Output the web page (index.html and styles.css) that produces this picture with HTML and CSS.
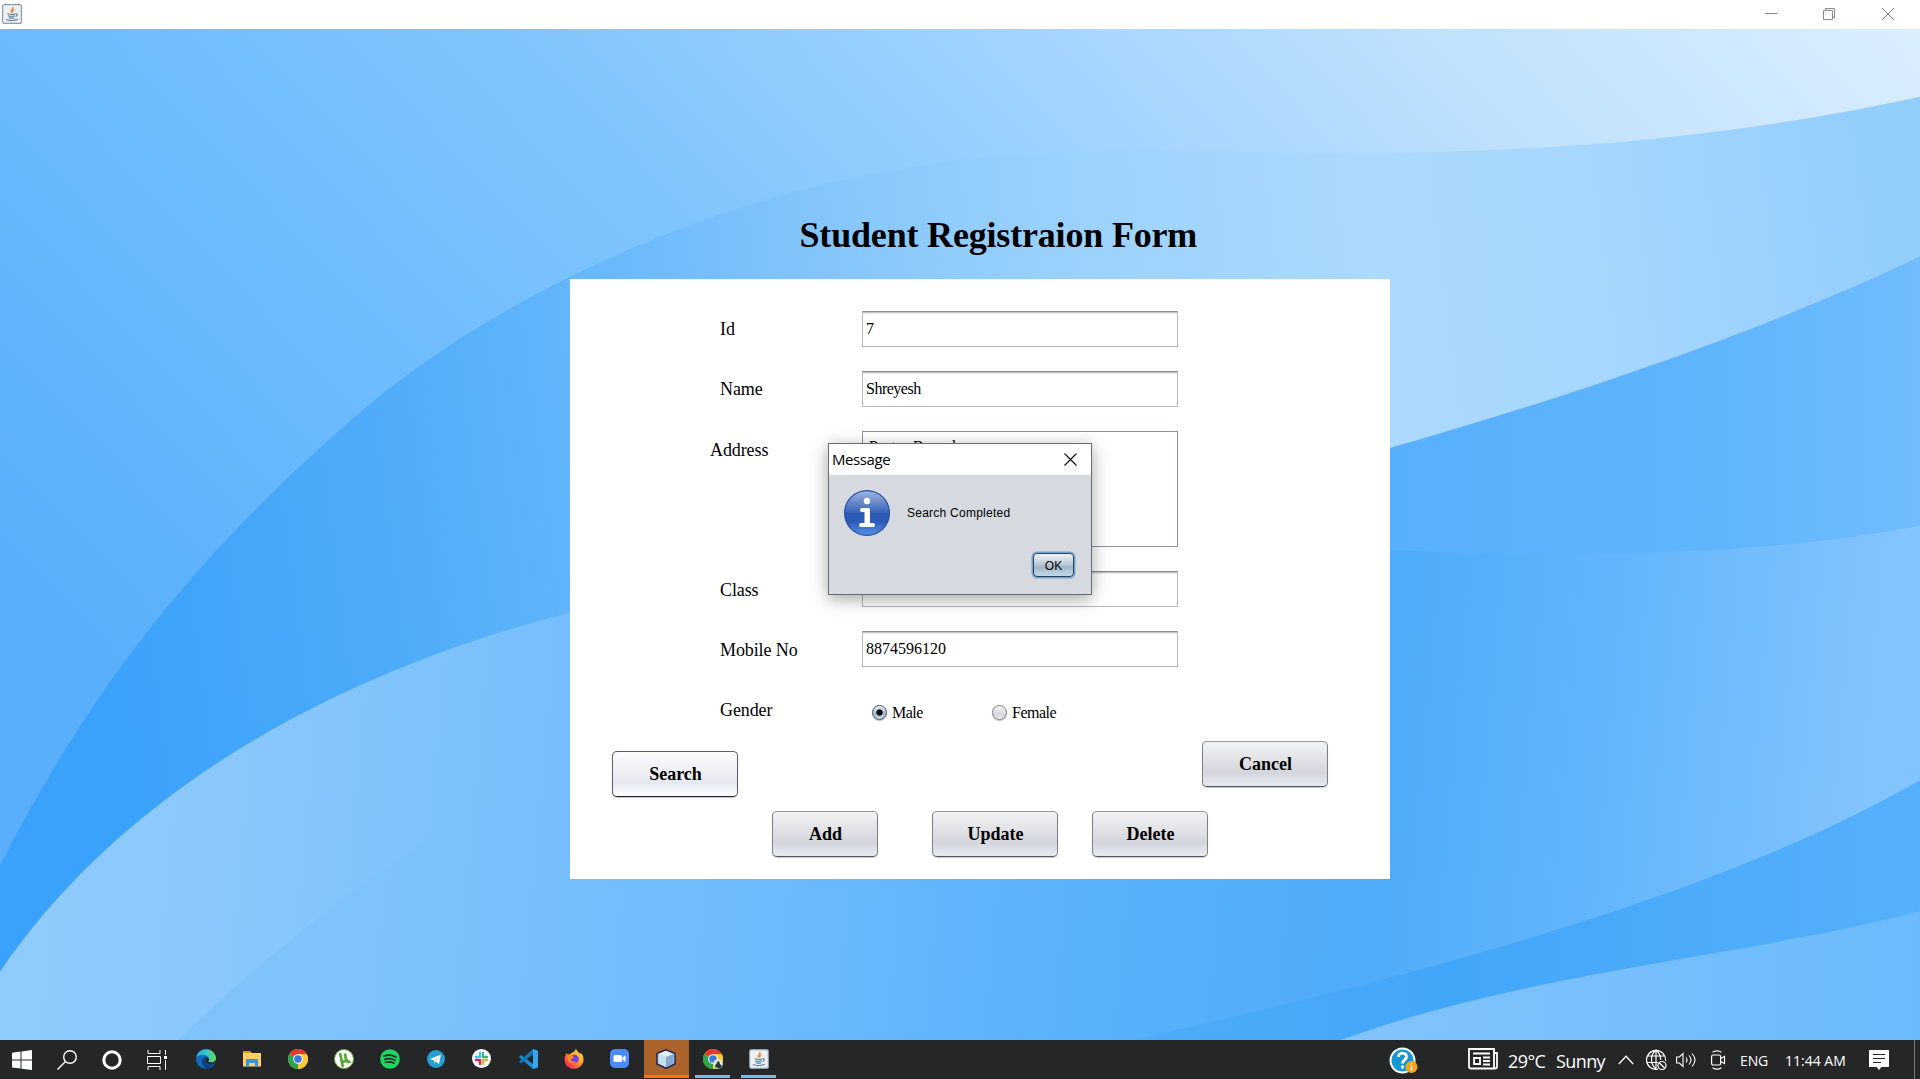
FILE: index.html
```
<!DOCTYPE html>
<html lang="en">
<head>
<meta charset="utf-8">
<title>Student Registration</title>
<link rel="stylesheet" href="styles.css">
</head>
<body>
<svg class="defs" aria-hidden="true">
  <symbol id="java" viewBox="0 0 20 20">
    <rect x=".6" y=".6" width="18.8" height="18.8" rx="2" fill="#eef1f4" stroke="#8a9dab" stroke-width="1.2"/>
    <path d="M10.6 3c1.800 1.700-3 2.800-1 5.600M12.300 5.500c-2 1-2.100 1.700-1.200 3" fill="none" stroke="#ee8b3c" stroke-width="1.500"/>
    <path d="M5.500 9.800c2.500.9 6 .8 8-.1M6 11.800c2 .8 5 .8 7 0M6.800 13.700c2 .7 4 .6 5.500 0M13.800 9.800c2.300-.2 1.700 2-.2 2.700M4 15.500c3 1.500 9 1.300 12-.2" fill="none" stroke="#5b84a3" stroke-width="1.200"/>
  </symbol>
  <symbol id="chrome" viewBox="0 0 20 20">
    <circle cx="10" cy="10" r="10" fill="#fcc934"/>
    <path d="M10 10 1.300 5A10 10 0 0 1 18.700 5z" fill="#e33b2e"/>
    <path d="M10 10 10 20A10 10 0 0 1 1.300 5z" fill="#2da44e"/>
    <path d="M10 5h8.700A10 10 0 0 1 10 20l4.500-7.500z" fill="#fcc934"/>
    <circle cx="10" cy="10" r="4.800" fill="#fff"/><circle cx="10" cy="10" r="3.800" fill="#3b78e7"/>
  </symbol>
</svg>

<header class="titlebar">
  <svg class="app-icon"><use href="#java"/></svg>
  <div class="win-controls">
    <svg width="12" height="12" viewBox="0 0 12 12"><path d="M0 5.500h12"/></svg>
    <svg width="12" height="12" viewBox="0 0 12 12"><path d="M.5 2.500h9v9h-9zM2.500 2.500v-2h9v9h-2"/></svg>
    <svg width="12" height="12" viewBox="0 0 12 12"><path d="m0 0 12 12M12 0 0 12"/></svg>
  </div>
</header>

<main class="workspace">
  <svg class="backdrop" viewBox="0 0 3136 1568" preserveAspectRatio="none">
    <defs>
      <linearGradient id="sky" gradientUnits="userSpaceOnUse" x1="100" y1="900" x2="2400" y2="-1400"><stop offset="0" stop-color="#59affb"/><stop offset=".18" stop-color="#6cbbfc"/><stop offset=".36" stop-color="#80c5fd"/><stop offset=".515" stop-color="#9fd2fe"/><stop offset=".685" stop-color="#c0e2fd"/><stop offset=".86" stop-color="#dceefe"/></linearGradient>
      <linearGradient id="arc" gradientUnits="userSpaceOnUse" x1="150" y1="900" x2="3100" y2="500"><stop offset="0" stop-color="#3aa2fa"/><stop offset=".16" stop-color="#4dabf9"/><stop offset=".28" stop-color="#64b6fb"/><stop offset=".42" stop-color="#83c5fc"/><stop offset=".55" stop-color="#9ad1fc"/><stop offset=".72" stop-color="#acd9fd"/><stop offset=".84" stop-color="#a7d7fd"/><stop offset="1" stop-color="#94cefb"/></linearGradient>
      <linearGradient id="bay" gradientUnits="userSpaceOnUse" x1="2270" y1="0" x2="3136" y2="0"><stop offset="0" stop-color="#58affc"/><stop offset=".6" stop-color="#60b5fb"/><stop offset="1" stop-color="#70bcfc"/></linearGradient>
      <linearGradient id="wave" gradientUnits="userSpaceOnUse" x1="0" y1="0" x2="3136" y2="300"><stop offset="0" stop-color="#92ccfd"/><stop offset=".15" stop-color="#8ac8fc"/><stop offset=".3" stop-color="#78c0fc"/><stop offset=".45" stop-color="#6cbafc"/><stop offset=".6" stop-color="#5ab1fb"/><stop offset=".75" stop-color="#4eacfa"/><stop offset=".87" stop-color="#64b6fb"/><stop offset="1" stop-color="#82c4fd"/></linearGradient>
      <linearGradient id="fold" gradientUnits="userSpaceOnUse" x1="300" y1="0" x2="800" y2="0"><stop offset="0" stop-color="#73bdfb" stop-opacity=".5"/><stop offset="1" stop-color="#73bdfb" stop-opacity="0"/></linearGradient>
      <linearGradient id="deep" gradientUnits="userSpaceOnUse" x1="1850" y1="0" x2="3136" y2="0"><stop offset="0" stop-color="#4eacfa"/><stop offset=".4" stop-color="#42a6f9"/><stop offset="1" stop-color="#56b0fc"/></linearGradient>
      <linearGradient id="corner" gradientUnits="userSpaceOnUse" x1="2190" y1="0" x2="3136" y2="0"><stop offset="0" stop-color="#82c4fd"/><stop offset="1" stop-color="#6bbafb"/></linearGradient>
    </defs>
    <path fill="url(#sky)" d="M0 0H3136V1568H0z"/>
    <path fill="url(#arc)" d="M0 1297C150 1020 320 812 600 585C850 388 1220 240 1568 203C1700 188 1850 188 2000 190C2400 198 2750 185 3136 105V1568H0z"/>
    <path fill="url(#bay)" d="M3136 353C2900 460 2600 560 2270 650L2000 800V1200H3136z"/>
    <path fill="url(#wave)" d="M0 1462C180 1210 500 1010 931 905C1300 830 1800 800 2270 808C2600 820 2900 815 3136 770V1568H0z"/>
    <path fill="url(#fold)" d="M290 1568C430 1440 600 1310 780 1210V1568z"/>
    <path fill="url(#deep)" d="M3136 1165C2850 1320 2450 1440 1850 1568H3136z"/>
    <path fill="url(#corner)" d="M3136 1368C2850 1440 2500 1460 2190 1568H3136z"/>
  </svg>

  <h1 class="page-title">Student Registraion Form</h1>

  <form class="panel">
    <div class="row"><label>Id</label><div class="field">7</div></div>
    <div class="row"><label>Name</label><div class="field name">Shreyesh</div></div>
    <div class="row row-area low"><label class="outdent">Address</label><div class="area">Pastor Bound</div></div>
    <div class="row low"><label>Class</label><div class="field"></div></div>
    <div class="row low"><label>Mobile No</label><div class="field">8874596120</div></div>
    <div class="row low"><label>Gender</label>
      <div class="radios">
        <span class="radio"><i class="dot checked"></i>Male</span>
        <span class="radio"><i class="dot"></i>Female</span>
      </div>
    </div>
    <div class="actions-top">
      <button type="button" class="btn wide hot">Search</button>
      <button type="button" class="btn wide">Cancel</button>
    </div>
    <div class="actions">
      <button type="button" class="btn add">Add</button>
      <button type="button" class="btn wide update">Update</button>
      <button type="button" class="btn delete">Delete</button>
    </div>
  </form>
</main>

<section class="dialog">
  <div class="dialog-title"><span>Message</span>
    <svg width="13" height="13" viewBox="0 0 13 13"><path d="m.5.5 12 12M12.500.5l-12 12" stroke="#000" stroke-width="1.100"/></svg>
  </div>
  <div class="dialog-body">
    <svg width="46" height="46" viewBox="0 0 46 46">
      <defs><linearGradient id="info" x1="0" y1="0" x2="0" y2="1"><stop offset="0" stop-color="#a0b6e3"/><stop offset=".48" stop-color="#3a65b8"/><stop offset=".5" stop-color="#2c5ab3"/><stop offset=".7" stop-color="#2d5cb8"/><stop offset="1" stop-color="#5c90ec"/></linearGradient></defs>
      <circle cx="23" cy="23" r="22.400" fill="url(#info)" stroke="#2450a8" stroke-width="1.200"/>
      <circle cx="23" cy="11" r="3.200" fill="#fff"/>
      <path d="M18 18h6.500q1.500 0 1.500 1.500V33h3a2 2 0 0 1 0 4H17a2 2 0 0 1 0-4h3.500V22H18a2 2 0 0 1 0-4z" fill="#fff"/>
    </svg>
    <p>Search Completed</p>
  </div>
  <button type="button" class="ok">OK</button>
</section>

<footer class="taskbar">
  <div class="sys"><svg width="20" height="20" viewBox="0 0 20 20"><path d="M0 2.800 8.500 1.600V9.600H0zM9.500 1.400 20 0V9.600H9.500zM0 10.600h8.500v8L0 17.400zM9.500 10.600H20V20L9.500 18.700z" fill="#fff"/></svg></div>
  <div class="sys"><svg width="20" height="20" viewBox="0 0 20 20" fill="none" stroke="#fff" stroke-width="1.400"><circle cx="13" cy="7" r="6.300"/><path d="M8.500 11.500.5 19.500"/></svg></div>
  <div class="sys"><svg width="20" height="20" viewBox="0 0 20 20"><circle cx="10" cy="10" r="8.200" fill="none" stroke="#fff" stroke-width="3"/></svg></div>
  <div class="sys"><svg width="21" height="20" viewBox="0 0 21 20" fill="none" stroke="#fff"><path d="M1 0v3.500h12V0M1 20v-3.500h12V20M.5 6.500h13v7H.5zM18.500 0v5M18.500 10v10"/><path d="M17 6h3v3h-3z" fill="#fff" stroke="none"/></svg></div>

  <div class="apps">
    <div class="app"><svg width="20" height="20" viewBox="0 0 20 20"><defs><linearGradient id="eg" x1="0" x2="1"><stop offset="0" stop-color="#2aa6dc"/><stop offset=".5" stop-color="#33c3cf"/><stop offset="1" stop-color="#6bdc55"/></linearGradient></defs><circle cx="10" cy="10" r="10" fill="#0f6cbd"/><path d="M.3 8.500C1.500-2.500 18.500-3 20 9c.2 3.500-3.500 5.200-7 4-1.500-.6 0-1.500 0-3C12.500 5 4 4 .3 8.500z" fill="url(#eg)"/><path d="M7 9c-2.500 3-1 9 4 10.900 3.500 0 6.500-2 7.700-4.400-5 2.500-10-.5-9.700-4.500 0-1.200.8-2 1.500-2.500C9 8 8 8.200 7 9z" fill="#123f86"/><path d="M13 13c-1.500-.6 0-1.500 0-3-.3-2-2.500-2-3.500-.5-.8 2.500.5 5.500 4.500 6.200 2 .2 4-.5 5-1.500.8-1 .9-2 1-3-1.500 2-4.500 2.800-7 1.800z" fill="#23272a"/></svg></div>
    <div class="app"><svg width="18" height="16" viewBox="0 0 18 16"><path d="M0 0h7l2 2H0z" fill="#d99a05"/><path d="M0 2h18v13.500H0z" fill="#fdd063"/><path d="M3 8h12v8h-3v-4H6v4H3z" fill="#3c92dd"/></svg></div>
    <div class="app"><svg width="20" height="20"><use href="#chrome"/></svg></div>
    <div class="app"><svg width="20" height="20" viewBox="0 0 20 20"><circle cx="10" cy="10" r="9.500" fill="#fff" stroke="#64ad3c"/><path d="M6 4l1.500 7c.5 2.500 4 2 4.500 0L11 4.500M12.500 10c.5 3 2 3.500 4 2.500M7.300 11 9 18" fill="none" stroke="#5ba831" stroke-width="2.700"/></svg></div>
    <div class="app"><svg width="20" height="20" viewBox="0 0 20 20"><circle cx="10" cy="10" r="9.800" fill="#1ed760"/><path d="M4 7c4-1.300 8.500-1 12 1M4.800 10.300c3.500-1 7-.7 10.200 1M5.500 13.300c3-.8 5.800-.5 8.500.9" fill="none" stroke="#22282a" stroke-width="1.700" stroke-linecap="round"/></svg></div>
    <div class="app"><svg width="18" height="18" viewBox="0 0 18 18"><circle cx="9" cy="9" r="9" fill="#279fd5"/><path d="M3 9 14 4.500 12 14 8.500 11.500 7 13.500V10.500z" fill="#fff"/><path d="M7 10.500 12 6.500 8.500 11.500z" fill="#bcdced"/></svg></div>
    <div class="app"><svg width="19" height="19" viewBox="0 0 19 19"><circle cx="9.500" cy="9.500" r="9.500" fill="#fff"/><g fill="none" stroke-width="2.300" stroke-linecap="round"><path d="M8 4v4M3.800 8H6" stroke="#36c5f0"/><path d="M11 8h4M11 4v2" stroke="#2eb67d"/><path d="M11 11v4M13 11h2" stroke="#ecb22e"/><path d="M4 11h4M8 13v2" stroke="#e01e5a"/></g></svg></div>
    <div class="app"><svg width="20" height="20" viewBox="0 0 20 20"><path d="M15 0 20 2V18l-5 2-14-12 2-2 12 9z" fill="#188bd3"/><path d="M15 0 20 2V18l-5 2V15L15 5 3 14.500 1 12.500z" fill="#1177bb"/><path d="M15 0 20 2V18l-5 2z" fill="#34a8ee"/></svg></div>
    <div class="app"><svg width="20" height="20" viewBox="0 0 20 20"><defs><linearGradient id="ff" x1="1" y1="0" x2="0" y2="1"><stop offset="0" stop-color="#fff04a"/><stop offset=".45" stop-color="#ff9a27"/><stop offset=".8" stop-color="#ff3750"/><stop offset="1" stop-color="#e3158c"/></linearGradient></defs><path d="M2.500 4 4 5.500 6 5C8 3 10 3.500 10.500 2L12 0c1 2.500 3 3 4 5l1-1c1.500 2 2.800 4 2.500 7-1 11.500-18 12-19 0C.3 8.500 1.500 6 2.500 4z" fill="url(#ff)"/><circle cx="10.500" cy="10" r="4.300" fill="#7542e5"/><path d="M4 7c3-1 5 0 6 1.500-1 1.500-3 .5-3.500 2.500 2 2.500 5 2 6 .5-1 4-8 4-9-1z" fill="#ff8b22"/></svg></div>
    <div class="app"><svg width="19" height="19" viewBox="0 0 19 19"><rect width="19" height="19" rx="5" fill="#4a8cff"/><rect x="3.500" y="6" width="8.500" height="7" rx="1.500" fill="#fff"/><path d="M12.500 8.500 15.500 6v7l-3-2.300z" fill="#fff"/></svg></div>
    <div class="app active"><svg width="20" height="20" viewBox="0 0 20 20"><path d="M10 .7 19 4.500V15L10 19.300 1 15V4.500z" fill="#aacbe4" stroke="#24244e" stroke-width="1.500"/><path d="M10 1.800 17.500 5 10 8 2.500 5z" fill="#e5f0f5"/><path d="M10 8 17.500 5v9.500L10 18z" fill="#87aacd"/><path d="M10 8 2.500 5v9.500L10 18z" fill="#c6deed"/></svg></div>
    <div class="app open"><svg width="20" height="20" viewBox="0 0 20 20"><use href="#chrome" width="20" height="20"/><circle cx="15" cy="15" r="4.800" fill="#dfe8e2"/><path d="M12 18c0-3 2-3 2-5l2-1 1 3 2 2-2 2.500z" fill="#24382f"/></svg></div>
    <div class="app open"><svg width="20" height="20"><use href="#java"/></svg></div>
  </div>

  <div class="tray">
    <svg class="help" width="30" height="28" viewBox="0 0 30 28"><circle cx="13.500" cy="13.500" r="12" fill="#1499d6" stroke="#fff" stroke-width="2"/><path d="M9.500 10c0-5.500 8.500-5 8 0-.3 3-4 3-4 6.500" fill="none" stroke="#fff" stroke-width="2.800"/><circle cx="13.500" cy="20" r="1.700" fill="#fff"/><circle cx="22.500" cy="20" r="6" fill="#f3a51e"/><path d="M22.500 19v4.500M22.500 16v1.800" stroke="#fff" stroke-width="1.500"/></svg>
    <svg class="news" width="30" height="22" viewBox="0 0 30 22" fill="none" stroke="#fff" stroke-width="1.800"><path d="M1 1h25v19.500H3q-2 0-2-2zM26 5h3v13.500q0 2-2 2h-2M5 5.500h17M15 9.500h7M15 13h7M15 16.500h7"/><path d="M6 10h6v6H6z"/></svg>
    <span class="temp">29°C</span><span class="cond">Sunny</span>
    <svg width="16" height="10" viewBox="0 0 16 10" fill="none" stroke="#fff" stroke-width="1.300"><path d="m.8 9 7.200-7.700L15.200 9"/></svg>
    <svg class="net" width="21" height="22" viewBox="0 0 21 22" fill="none" stroke="#fff" stroke-width="1.200"><path d="M12 20.200A9.500 9.500 0 1 1 19.500 12M10 1c-6 5-6 14 0 19M10 1c3.500 3 4.700 6.500 4.600 10M10 1v19M1.500 7h17M1 13.500h11"/><circle cx="16" cy="16.500" r="4"/><path d="m13 13.500 6 6"/></svg>
    <svg class="vol" width="21" height="18" viewBox="0 0 21 18" fill="none" stroke="#fff" stroke-width="1.100"><path d="M.6 6h2.800L7 2.500v13L3.400 12H.6zM10 6.500q2 2.500 0 5M13 4.500q4 4.500 0 9M16 2.500q6 6.500 0 13"/></svg>
    <svg class="cam" width="16" height="20" viewBox="0 0 16 20" fill="none" stroke="#fff" stroke-width="1.200"><rect x="1.600" y="5" width="9" height="10" rx="1.500"/><path d="M10.600 8.500 14.500 6.500v7l-3.900-2M2.500 2.300Q7-.5 11.500 2.300M2.500 17.700q4.500 2.800 9 0"/></svg>
    <span class="lang">ENG</span><span class="clock">11:44 AM</span>
    <svg class="note" width="20" height="20" viewBox="0 0 20 20"><path d="M0 0h20v17h-7.500L10 20 7.500 17H0z" fill="#fff"/><path d="M4 4.500h12M4 8.500h12M4 12.500h8" stroke="#242628" stroke-width="1.200"/></svg>
    <i class="peek"></i>
  </div>
</footer>
</body>
</html>
```
FILE: styles.css
```
* { box-sizing: border-box; }
body { margin: 0; width: 1920px; height: 1079px; overflow: hidden; display: flex; flex-direction: column; position: relative; font-family: "Liberation Serif", "Times New Roman", serif; color: #000; }
svg { display: block; flex: none; }
.defs { position: absolute; width: 0; height: 0; }

.titlebar { height: 29px; flex: none; background: #fff; display: flex; justify-content: space-between; align-items: flex-start; padding: 4px 26px 0 2px; }
.app-icon { width: 20px; height: 20px; }
.win-controls { display: flex; gap: 47px; padding-top: 4px; }
.win-controls svg { fill: none; stroke: #8b8b8b; }
.win-controls svg:first-child { margin-right: -1px; }

.workspace { height: 1011px; flex: none; position: relative; display: flex; flex-direction: column; }
.backdrop { position: absolute; inset: 0; width: 100%; height: 100%; }
.page-title { position: relative; margin: 185px 0 0 799.500px; height: 65px; line-height: 42px; font-size: 36px; font-weight: bold; white-space: nowrap; letter-spacing: -.18px; }

.panel { position: relative; margin-left: 570px; width: 820px; height: 600px; background: #fff; padding-top: 32px; }
.row { display: flex; height: 36px; margin-bottom: 24px; padding-left: 150px; }
.row label { width: 142px; font-size: 18px; line-height: 37px; letter-spacing: -.1px; }
.row.low label { line-height: 39px; }
.row label.outdent { margin-left: -10px; width: 152px; }
.row-area { height: 116px; }
.field { width: 316px; height: 36px; padding-left: 3px; font-size: 16px; line-height: 33px; border: 1px solid #b5b6b9; border-top-color: #8b8c90; box-shadow: inset 0 1px 0 #c4c4c6, inset 0 2px 0 #ececec; }
.field.name { letter-spacing: -.5px; }
.area { width: 316px; height: 116px; border: 1px solid #8f929f; padding: 5px 0 0 6px; font-size: 16px; line-height: 20px; }
.radios { display: flex; padding-left: 10px; font-size: 16px; line-height: 43px; letter-spacing: -.5px; }
.radio { display: flex; width: 120px; gap: 5px; }
.dot { width: 15px; height: 15px; margin-top: 14px; border-radius: 50%; border: 1px solid #7b7e86; background: linear-gradient(#f7f7f9, #d5d7de 65%, #eceef3); box-shadow: 0 1px 1px #bbb; }
.dot.checked { border-color: #3b566e; background: radial-gradient(circle, #111 0 2.800px, transparent 3.600px), linear-gradient(#eaf0f5, #a0b6c9 60%, #cadbe9); }

.actions-top { display: flex; justify-content: space-between; align-items: flex-start; height: 70px; margin-top: -10px; padding: 0 62px 0 42px; }
.actions { display: flex; padding-left: 202px; }
.btn { width: 116px; height: 46px; padding: 1px 0 0 1px; font: bold 18px "Liberation Serif", "Times New Roman", serif; color: #000; border: 1px solid #7d7f86; border-top-color: #95979c; border-bottom-color: #55575f; border-radius: 5px; background: linear-gradient(#f3f3f5, #e1e2e6 40%, #d4d6de 70%, #e6e8f1 95%); box-shadow: 0 1px 1px #c2c3c8; }
.btn.wide { width: 126px; }
.btn.hot { margin-top: 10px; border-color: #5b5d68; border-bottom-color: #25262e; background: linear-gradient(#fcfcfd, #edeff4 45%, #e5e8ef 70%, #fafbff 95%); }
.btn.add { width: 106px; }
.btn.update { margin: 0 34px 0 54px; }

.dialog { position: absolute; left: 828px; top: 443px; width: 264px; height: 152px; border: 1px solid #6b6c6e; background: #d6d9e0; box-shadow: 0 4px 16px rgba(0,0,0,.36); font-family: "Liberation Sans", Arial, sans-serif; font-size: 12px; }
.dialog-title { height: 31px; background: #fff; display: flex; justify-content: space-between; align-items: center; padding: 0 14px 0 3px; font: 15px/31px "Open Sans", "Noto Sans", sans-serif; }
.dialog-title span { letter-spacing: -.4px; }
.dialog-body { display: flex; padding: 15px 0 0 15px; gap: 17px; height: 76px; }
.dialog-body p { margin: 0; line-height: 46px; letter-spacing: .25px; }
.ok { display: block; margin: 2px 0 0 204px; width: 41px; height: 24px; padding: 1px 0 0; font: 12px "Liberation Sans", Arial, sans-serif; color: #000; border: 1px solid #28445e; border-radius: 4px; background: linear-gradient(#f0f4f7, #bccad6 45%, #a2b6c6 60%, #c3d8ea); box-shadow: 0 0 0 1.500px #73a4d1; }

.taskbar { height: 39px; flex: none; background: #242628; display: flex; color: #fff; font-family: "Open Sans", "Noto Sans", sans-serif; }
.sys { width: 45px; display: flex; align-items: center; justify-content: center; padding-right: 1px; }
.apps { display: flex; margin-left: 3px; }
.app { width: 46px; height: 38px; display: flex; align-items: center; justify-content: center; border-bottom: 3px solid transparent; padding: 2px 1px 0 0; }
.app.active { background: #ab622b; border-bottom-color: #ff7500; margin-left: 1px; width: 45px; padding-right: 2px; }
.app.open { width: 35px; margin: 0 5px 0 6px; border-bottom-color: #76b9ed; padding-right: 0; }
.tray { margin-left: auto; display: flex; align-items: center; height: 39px; width: 531px; }
.help { margin-top: 2px; }
.news { margin: 0 10px 0 49px; position: relative; top: -1px; }
.temp, .cond { font-size: 18px; white-space: nowrap; letter-spacing: -.6px; padding-top: 3px; }
.temp { width: 48px; }
.cond { width: 62px; }
.net { margin: 0 9px 0 12px; }
.cam { margin: 0 14px 0 13px; }
.lang, .clock { font-size: 14px; white-space: nowrap; padding-top: 1px; letter-spacing: -.3px; }
.lang { width: 45px; letter-spacing: -.1px; }
.clock { width: 84px; letter-spacing: 0; }
.peek { width: 1px; height: 39px; background: #77797b; margin-left: 25px; }
```
